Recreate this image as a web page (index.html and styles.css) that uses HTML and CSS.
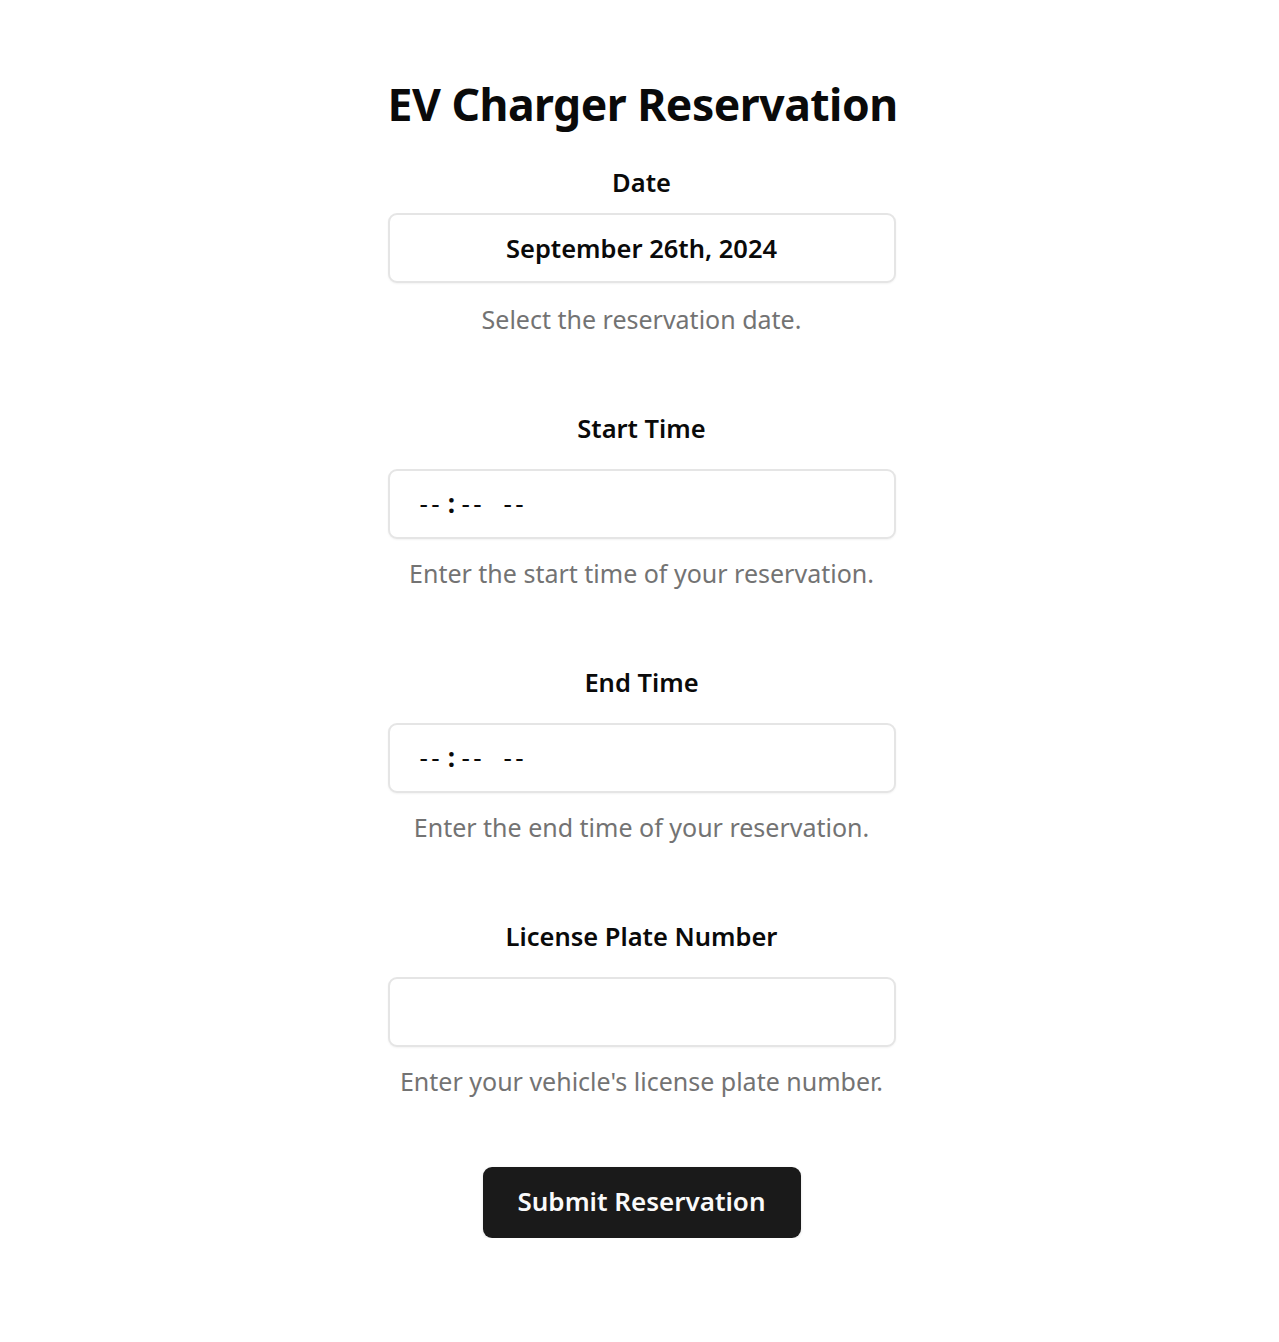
FILE: index.html
```html
<!DOCTYPE html>
<html lang="en">
<head>
<meta charset="utf-8">
<title>EV Charger Reservation</title>
<link rel="stylesheet" href="styles.css">
</head>
<body>
<main class="page">
  <h1 class="title">EV Charger Reservation</h1>
  <form class="form">
    <div class="fields">
      <div class="field field-date">
        <label class="label">Date</label>
        <div class="input date-input">September 26th, 2024</div>
        <p class="help">Select the reservation date.</p>
      </div>
      <div class="field">
        <label class="label">Start Time</label>
        <div class="input time-input"><span class="seg">--</span><span class="colon">:</span><span class="seg">--</span><span class="seg ampm">--</span></div>
        <p class="help">Enter the start time of your reservation.</p>
      </div>
      <div class="field">
        <label class="label">End Time</label>
        <div class="input time-input"><span class="seg">--</span><span class="colon">:</span><span class="seg">--</span><span class="seg ampm">--</span></div>
        <p class="help">Enter the end time of your reservation.</p>
      </div>
      <div class="field">
        <label class="label">License Plate Number</label>
        <input class="input text-input" type="text">
        <p class="help">Enter your vehicle's license plate number.</p>
      </div>
    </div>
    <button class="submit" type="button">Submit Reservation</button>
  </form>
</main>
</body>
</html>
```

FILE: styles.css
```css
* { box-sizing: border-box; }
body {
  margin: 0;
  padding-left: 4px;
  background: #ffffff;
  color: #0a0a0a;
  font-family: "Noto Sans", "Open Sans", sans-serif;
}
.page {
  width: 508px;
  margin: 0 auto;
  padding-top: 76px;
  display: flex;
  flex-direction: column;
  align-items: stretch;
}
.title {
  margin: 0 0 34px;
  font-size: 44.5px;
  line-height: 56px;
  font-weight: 700;
  text-align: center;
  letter-spacing: -0.5px;
  white-space: nowrap;
}
.form {
  display: flex;
  flex-direction: column;
  align-items: center;
}
.fields {
  width: 100%;
  display: flex;
  flex-direction: column;
  gap: 77px;
}
.field {
  display: flex;
  flex-direction: column;
  align-items: stretch;
}
.label {
  display: block;
  text-align: center;
  font-size: 25.5px;
  line-height: 32px;
  font-weight: 600;
  margin-bottom: 25px;
}
.field-date .label {
  margin-bottom: 15px;
}
.input {
  width: 100%;
  height: 70px;
  border: 2px solid #e5e5e5;
  border-radius: 9px;
  background: #fff;
  box-shadow: 0 1px 2px rgba(0,0,0,0.05);
  font-family: inherit;
  font-size: 25px;
  color: #0a0a0a;
}
.date-input {
  display: flex;
  align-items: center;
  justify-content: center;
  font-size: 25.5px;
  font-weight: 600;
}
.time-input {
  display: flex;
  align-items: center;
  padding-left: 30px;
  padding-bottom: 3px;
  font-size: 26px;
  font-weight: 400;
}
.seg {
  display: inline-block;
  width: 22px;
  letter-spacing: 3.5px;
  white-space: nowrap;
}
.colon {
  display: inline-block;
  width: 20px;
  text-align: center;
  font-weight: 700;
}
.ampm { margin-left: 20px; }
.text-input {
  display: block;
  padding: 0 30px;
  outline: none;
}
.help {
  margin: 18px 0 0;
  text-align: center;
  font-size: 25px;
  line-height: 32px;
  color: #737373;
}
.field-date .help {
  margin-top: 20px;
}
.submit {
  margin-top: 70px;
  width: 318px;
  height: 71px;
  padding: 0 0 3px;
  border: none;
  border-radius: 9px;
  background: #1a1a1a;
  color: #fafafa;
  font-family: inherit;
  font-size: 26px;
  font-weight: 600;
  box-shadow: 0 1px 3px rgba(0,0,0,0.12);
  cursor: pointer;
}
```
